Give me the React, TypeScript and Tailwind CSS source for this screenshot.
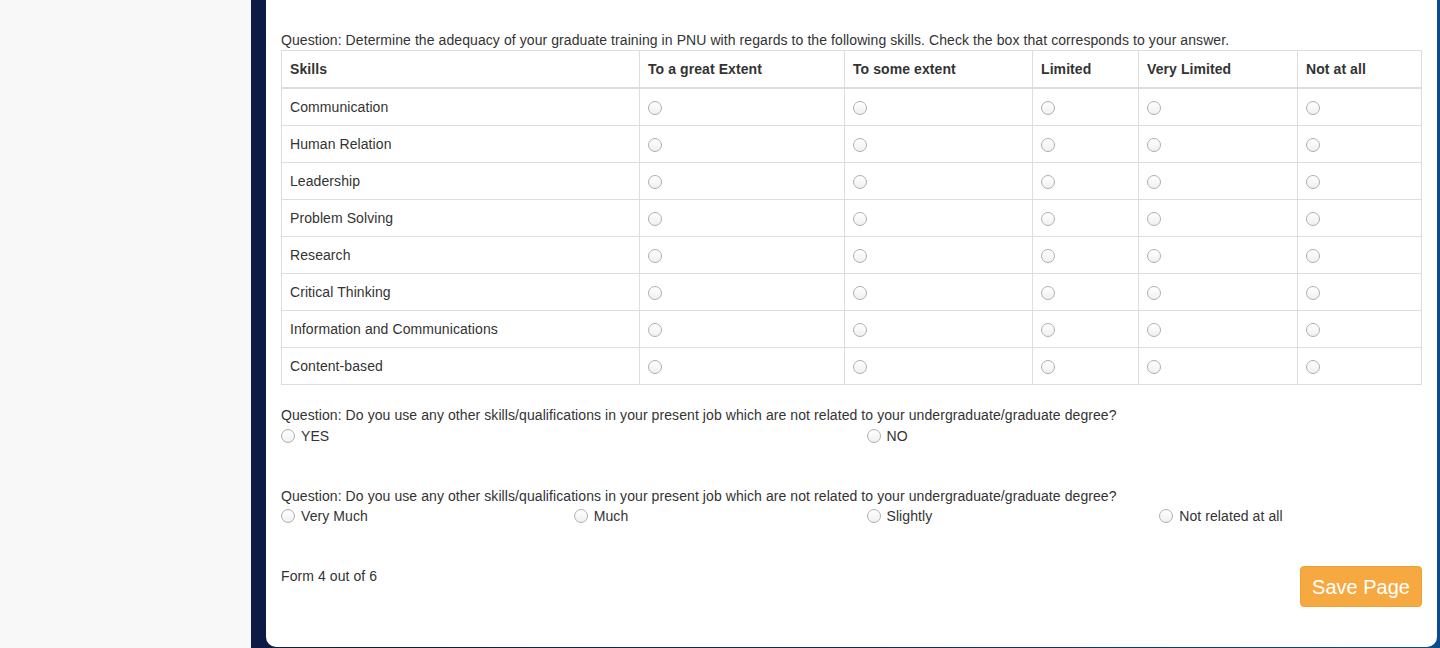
import React from "react";

const skills = [
  "Communication",
  "Human Relation",
  "Leadership",
  "Problem Solving",
  "Research",
  "Critical Thinking",
  "Information and Communications",
  "Content-based",
];

const cols = [
  { label: "To a great Extent", w: "w-[205px]" },
  { label: "To some extent", w: "w-[188px]" },
  { label: "Limited", w: "w-[106px]" },
  { label: "Very Limited", w: "w-[159px]" },
  { label: "Not at all", w: "w-[124px]" },
];

function Radio() {
  return (
    <span className="inline-block w-[14px] h-[14px] rounded-full border border-[#b0b0b0] bg-gradient-to-b from-white to-[#f0f0f0] shrink-0" />
  );
}

function Option({ label, shift }: { label: string; shift?: boolean }) {
  return (
    <div className={`px-[15px] flex items-center h-[20px] ${shift ? "mt-[1px]" : ""}`}>
      <Radio />
      <span className="ml-[6px]">{label}</span>
    </div>
  );
}

export default function App() {
  return (
    <div className="flex h-[648px] overflow-hidden font-['Liberation_Sans',Arial,sans-serif] text-[14px] leading-[20px] tracking-[0.08px] text-[#333333]">
      <div className="w-[251px] shrink-0 bg-[#f8f8f8]" />
      <div className="flex-1 pl-[15px] pr-[5px] bg-gradient-to-r from-[#0d1a46] via-[#0b2a68] to-[#0a4b8f]">
        <div className="bg-white rounded-b-[10px] h-[647px] px-[15px] pt-[30px]">
          <div>
            Question: Determine the adequacy of your graduate training in PNU with regards to the following skills. Check the box that corresponds to your answer.
          </div>
          <table className="w-full table-fixed border-collapse border border-[#dddddd] mb-[20px]">
            <thead>
              <tr>
                <th className="w-[358px] text-left font-bold p-[8px] border border-[#dddddd] border-b-2">
                  Skills
                </th>
                {cols.map((c) => (
                  <th
                    key={c.label}
                    className={`${c.w} text-left font-bold p-[8px] border border-[#dddddd] border-b-2`}
                  >
                    {c.label}
                  </th>
                ))}
              </tr>
            </thead>
            <tbody>
              {skills.map((s) => (
                <tr key={s}>
                  <td className="p-[8px] border border-[#dddddd]">{s}</td>
                  {cols.map((c) => (
                    <td key={c.label} className="p-[8px] border border-[#dddddd]">
                      <div className="flex items-center h-[20px] pt-[1px]">
                        <Radio />
                      </div>
                    </td>
                  ))}
                </tr>
              ))}
            </tbody>
          </table>

          <div>
            Question: Do you use any other skills/qualifications in your present job which are not related to your undergraduate/graduate degree?
          </div>
          <div className="grid grid-cols-2 -mx-[15px]">
            <Option label="YES" shift />
            <Option label="NO" shift />
          </div>

          <div className="mt-[40px]">
            Question: Do you use any other skills/qualifications in your present job which are not related to your undergraduate/graduate degree?
          </div>
          <div className="grid grid-cols-4 -mx-[15px]">
            <Option label="Very Much" />
            <Option label="Much" />
            <Option label="Slightly" />
            <Option label="Not related at all" />
          </div>

          <div className="mt-[40px] flex justify-between items-start">
            <div>Form 4 out of 6</div>
            <button className="h-[41px] w-[122px] rounded-[4px] bg-[#f7a941] border border-[#f0a030] text-white text-[20px] leading-[24px] tracking-normal">
              Save Page
            </button>
          </div>
        </div>
      </div>
    </div>
  );
}
